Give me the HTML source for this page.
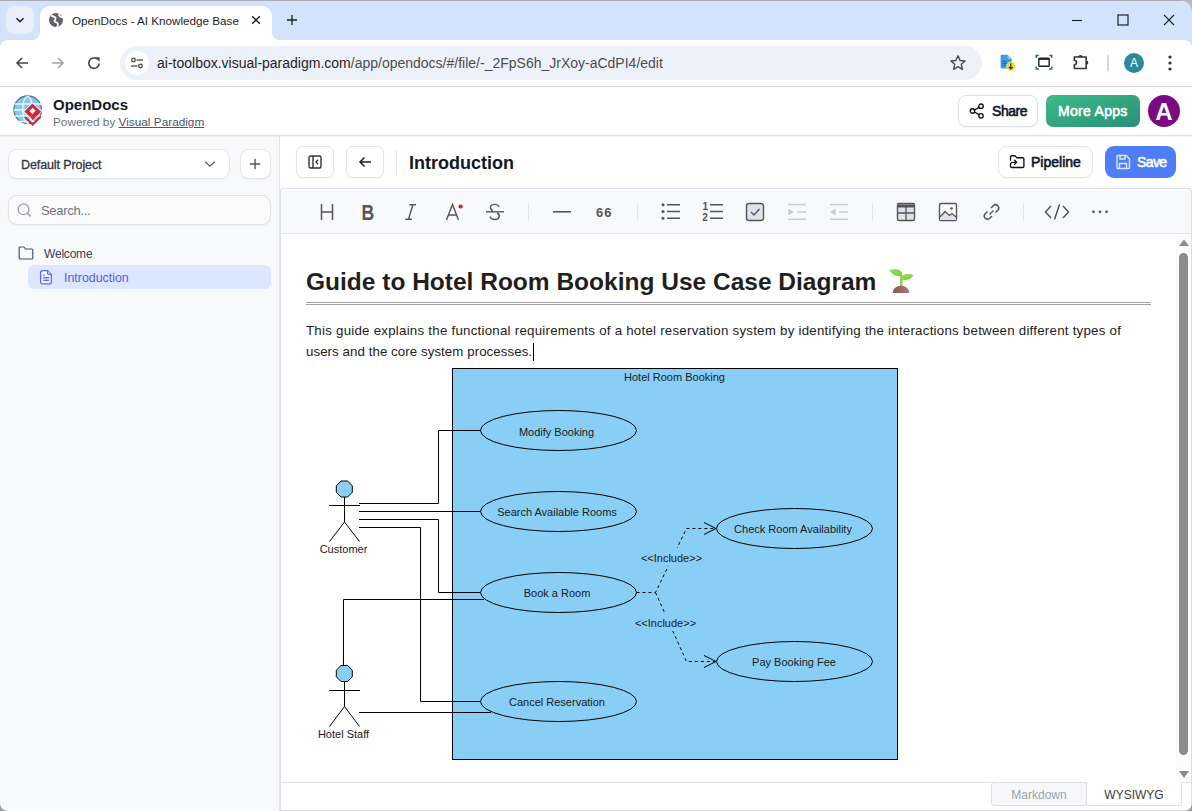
<!DOCTYPE html>
<html><head><meta charset="utf-8">
<style>
*{box-sizing:border-box;margin:0;padding:0}
html,body{width:1192px;height:811px;overflow:hidden;background:#fff;font-family:"Liberation Sans",sans-serif;position:relative}
.a{position:absolute}
svg{display:block}
/* chrome */
#tabstrip{left:0;top:0;width:1192px;height:40px;background:#d3e3fd}
#topline{left:0;top:0;width:1192px;height:1px;background:#a8acb2}
#toolbar{left:0;top:40px;width:1192px;height:46px;background:#fff}
#tbline{left:0;top:86px;width:1192px;height:1px;background:#d6d8db}
.tabtxt{font-size:11.7px;color:#1f1f1f;white-space:nowrap}
#addr{left:120px;top:46px;width:862px;height:34px;border-radius:17px;background:#edf2fa}
#url{left:157px;top:55px;font-size:14px;color:#1f1f1f;white-space:nowrap}
/* app header */
#hdr{left:0;top:87px;width:1192px;height:48px;background:#fff;box-shadow:0 1px 3px rgba(0,0,0,.12)}
.btn{position:absolute;border:1px solid #dcdfe4;border-radius:7px;background:#fff;box-shadow:0 1px 2px rgba(0,0,0,0.04)}
/* sidebar */
#side{left:0;top:135px;width:280px;height:676px;background:#f8f9fb;border-right:1px solid #e3e4ea}
/* main */
#topbar{left:280px;top:135px;width:912px;height:53px;background:#fff}
#edtb{left:280px;top:188px;width:912px;height:46px;background:#f8f9fc;border-top:1px solid #dfe0e8;border-bottom:1px solid #e3e4eb;border-left:1px solid #dfe0e8;border-top-left-radius:3px}
#content{left:280px;top:234px;width:912px;height:548px;background:#fff;border-left:1px solid #dfe0e8}
#bottom{left:280px;top:782px;width:912px;height:29px;background:#fff;border-top:1px solid #dfe0e8;border-left:1px solid #dfe0e8}
.ico{position:absolute}
</style></head><body>
<!-- ============ BROWSER CHROME ============ -->
<div id="tabstrip" class="a"></div>
<div id="topline" class="a"></div>
<!-- tab search chevron -->
<!-- active tab -->
<div class="a" style="left:40px;top:6px;width:232px;height:40px;background:#fff;border-radius:10px 10px 0 0"></div>
<div class="a" style="left:32px;top:30px;width:8px;height:10px;background:#fff"></div>
<div class="a" style="left:24px;top:22px;width:16px;height:18px;background:#d3e3fd;border-bottom-right-radius:8px"></div>
<div class="a" style="left:6px;top:6px;width:28px;height:28px;border-radius:8px;background:#e9effb"></div>
<svg class="a" style="left:14px;top:14px" width="12" height="12" viewBox="0 0 12 12"><path d="M2.5 4.2 L6 7.7 L9.5 4.2" fill="none" stroke="#1f1f1f" stroke-width="1.6"/></svg>
<div class="a" style="left:272px;top:30px;width:8px;height:10px;background:#fff"></div>
<div class="a" style="left:272px;top:22px;width:16px;height:18px;background:#d3e3fd;border-bottom-left-radius:8px"></div>
<svg class="a" style="left:49px;top:13px" width="14" height="14" viewBox="0 0 14 14"><circle cx="7" cy="7" r="7" fill="#5f6368"/><path d="M2.2 2.6 C4 3.6 5.6 3.2 6.4 4.6 C7.2 6 5.2 6.8 5.6 8.2 C6 9.6 8.2 9.2 8.8 10.6 C9.2 11.6 8.6 13 8.2 13.9 M10.4 1.2 C9.8 2.4 10.6 3.6 12 3.8 C12.8 3.9 13.4 4.3 13.8 5" fill="none" stroke="#fff" stroke-width="1.8"/></svg>
<div class="a tabtxt" style="left:72px;top:13.5px">OpenDocs - AI Knowledge Base</div>
<svg class="a" style="left:251px;top:15px" width="10" height="10" viewBox="0 0 10 10"><path d="M1.2 1.2 L8.8 8.8 M8.8 1.2 L1.2 8.8" stroke="#1f1f1f" stroke-width="1.4"/></svg>
<svg class="a" style="left:286px;top:14px" width="12" height="12" viewBox="0 0 12 12"><path d="M6 1 V11 M1 6 H11" stroke="#1f1f1f" stroke-width="1.3"/></svg>
<!-- window controls -->
<svg class="a" style="left:1071px;top:14px" width="12" height="12" viewBox="0 0 12 12"><path d="M1 6.5 H11" stroke="#1f1f1f" stroke-width="1.1"/></svg>
<svg class="a" style="left:1117px;top:14px" width="12" height="12" viewBox="0 0 12 12"><rect x="1" y="1" width="10" height="10" fill="none" stroke="#1f1f1f" stroke-width="1.2"/></svg>
<svg class="a" style="left:1163px;top:14px" width="12" height="12" viewBox="0 0 12 12"><path d="M1 1 L11 11 M11 1 L1 11" stroke="#1f1f1f" stroke-width="1.1"/></svg>

<div id="toolbar" class="a" style="top:40px;height:46px;border-radius:0"></div>
<div class="a" style="left:0;top:40px;width:1192px;height:46px;background:#fff"></div>
<div id="tbline" class="a"></div>
<svg class="a" style="left:0;top:40px" width="8" height="8" viewBox="0 0 8 8"><path d="M0 0 H8 C3.6 0 0 3.6 0 8 Z" fill="#d3e3fd"/></svg>
<svg class="a" style="left:1184px;top:40px" width="8" height="8" viewBox="0 0 8 8"><path d="M0 0 H8 V8 C8 3.6 4.4 0 0 0 Z" fill="#d3e3fd"/></svg>
<!-- nav -->
<svg class="a" style="left:14px;top:55px" width="16" height="16" viewBox="0 0 16 16"><path d="M14 8 H3 M8 3 L3 8 L8 13" fill="none" stroke="#474747" stroke-width="1.6"/></svg>
<svg class="a" style="left:50px;top:55px" width="16" height="16" viewBox="0 0 16 16"><path d="M2 8 H13 M8 3 L13 8 L8 13" fill="none" stroke="#a4a4a4" stroke-width="1.6"/></svg>
<svg class="a" style="left:86px;top:55px" width="16" height="16" viewBox="0 0 16 16"><path d="M13.2 8.4 A5.2 5.2 0 1 1 11.4 4.2" fill="none" stroke="#474747" stroke-width="1.6"/><path d="M9 2.2 H13.6 V6.8 Z" fill="#474747"/></svg>
<div id="addr" class="a"></div>
<div class="a" style="left:125px;top:51px;width:24px;height:24px;border-radius:12px;background:#fff"></div>
<svg class="a" style="left:130px;top:56px" width="14" height="14" viewBox="0 0 14 14"><circle cx="3.5" cy="4" r="1.8" fill="none" stroke="#474747" stroke-width="1.3"/><path d="M6.5 4 H13" stroke="#474747" stroke-width="1.3"/><circle cx="10.5" cy="10" r="1.8" fill="none" stroke="#474747" stroke-width="1.3"/><path d="M1 10 H7.5" stroke="#474747" stroke-width="1.3"/></svg>
<div id="url" class="a">ai-toolbox.visual-paradigm.com<span style="color:#4d4d4d">/app/opendocs/#/file/-_2FpS6h_JrXoy-aCdPI4/edit</span></div>
<svg class="a" style="left:949px;top:54px" width="18" height="18" viewBox="0 0 18 18"><path d="M9 1.8 L11.1 6.5 L16.1 7 L12.3 10.3 L13.4 15.3 L9 12.7 L4.6 15.3 L5.7 10.3 L1.9 7 L6.9 6.5 Z" fill="none" stroke="#474747" stroke-width="1.4" stroke-linejoin="round"/></svg>
<svg class="a" style="left:996px;top:50px" width="22" height="22" viewBox="996 50 22 22"><path d="M1002 54.8 H1007.5 L1011.7 59 V67.2 A1.4 1.4 0 0 1 1010.3 68.6 H1002 A1.4 1.4 0 0 1 1000.6 67.2 V56.2 A1.4 1.4 0 0 1 1002 54.8 Z" fill="#3b9be8"/><path d="M1007.5 54.8 L1011.7 59 H1008.5 A1 1 0 0 1 1007.5 58 Z" fill="#63dccb"/><path d="M1002.5 61.3 H1006 M1002.5 63.3 H1007 M1002.5 65.3 H1005.5" stroke="#1f5fa8" stroke-width="1"/><circle cx="1010.8" cy="66.3" r="4.6" fill="#f3dc3c"/><path d="M1010.8 63.2 V68.6 M1008.8 66.8 L1010.8 68.8 L1012.8 66.8" fill="none" stroke="#1d3a6e" stroke-width="1.2"/></svg>
<svg class="a" style="left:1032px;top:50px" width="24" height="24" viewBox="1032 50 24 24"><path d="M1036.3 58 V55.5 H1038.8 M1049.2 55.5 H1051.7 V58 M1051.7 66.5 V69 H1049.2 M1038.8 69 H1036.3 V66.5" fill="none" stroke="#1e7e34" stroke-width="1.5"/><rect x="1038.8" y="58.3" width="10.4" height="7.9" rx="0.8" fill="none" stroke="#222" stroke-width="1.4"/><path d="M1038.8 59 H1049.2" stroke="#222" stroke-width="1.8"/></svg>
<svg class="a" style="left:1068px;top:50px" width="26" height="24" viewBox="1068 50 26 24"><path d="M1074.3 57 H1086.2 V68.5 H1074.3 V64.7 A2.2 2.2 0 0 0 1074.3 60.3 Z" fill="none" stroke="#333" stroke-width="1.6" stroke-linejoin="round"/><path d="M1078.3 57 A2.1 2.1 0 0 1 1082.5 57 Z" fill="#333"/><path d="M1086.2 60.6 A2.1 2.1 0 0 1 1086.2 64.8 Z" fill="#333"/></svg>
<div class="a" style="left:1107px;top:55px;width:1.5px;height:16px;background:#c7d7f5"></div>
<div class="a" style="left:1124px;top:53px;width:20px;height:20px;border-radius:10px;background:#2a8a99;color:#fff;font-size:12px;text-align:center;line-height:20px">A</div>
<svg class="a" style="left:1166px;top:55px" width="8" height="16" viewBox="0 0 8 16"><circle cx="4" cy="2" r="1.6" fill="#333"/><circle cx="4" cy="8" r="1.6" fill="#333"/><circle cx="4" cy="14" r="1.6" fill="#333"/></svg>

<!-- ============ APP HEADER ============ -->
<div id="hdr" class="a"></div>
<svg class="a" style="left:8px;top:90px" width="40" height="40" viewBox="8 90 40 40">
 <circle cx="27.7" cy="109.7" r="13.8" fill="#84c8f0" stroke="#4f6f7f" stroke-width="1.1"/>
 <g fill="none" stroke="#e8f5fd" stroke-width="1.4">
  <path d="M14.5 104 H41 M14 110 H41.5 M15 116 H40 M17.5 121.5 H38"/>
  <path d="M27.7 96 C21 100 21 119 27.7 123.5 M27.7 96 C34 100 34 119 27.7 123.5"/>
 </g>
 <path d="M22.8 111.8 L32.4 102.6 L42 111.6 L32.6 121 Z" fill="#fff"/>
 <path d="M24.3 111.6 L32.4 103.4 L41.2 111.8 L35.4 117.6 L32 114.4 L35.6 110.8 L32.7 107.8 L29.4 111.1 L32.6 114.3 L30 117 Z" fill="#cd2a36"/>
 <path d="M30 117 L32.6 114.3 L35.4 117.6 L32.8 120.2 Z" fill="#cd2a36"/>
 <path d="M24.8 117 L32.7 124.6 L40.8 116.6" fill="none" stroke="#cd2a36" stroke-width="2.1"/>
</svg>
<div class="a" style="left:53px;top:96px;font-size:15px;font-weight:bold;color:#111827">OpenDocs</div>
<div class="a" style="left:53px;top:115px;font-size:11.8px;color:#6b7280">Powered by <span style="text-decoration:underline;color:#4b5563">Visual Paradigm</span></div>
<div class="btn" style="left:958px;top:95px;width:80px;height:32px;border-radius:8px"></div>
<svg class="a" style="left:969px;top:103px" width="16" height="16" viewBox="0 0 16 16"><circle cx="12" cy="3.2" r="2.2" fill="none" stroke="#111" stroke-width="1.4"/><circle cx="3.5" cy="8" r="2.2" fill="none" stroke="#111" stroke-width="1.4"/><circle cx="12" cy="12.8" r="2.2" fill="none" stroke="#111" stroke-width="1.4"/><path d="M5.4 7 L10.1 4.3 M5.4 9 L10.1 11.7" stroke="#111" stroke-width="1.4"/></svg>
<div class="a" style="left:992px;top:103px;font-size:14px;color:#111827;letter-spacing:-0.45px;-webkit-text-stroke:0.6px #111827">Share</div>
<div class="a" style="left:1046px;top:95px;width:94px;height:32px;border-radius:7px;background:linear-gradient(160deg,#3dbb85,#2a8f78)"></div>
<div class="a" style="left:1058px;top:103px;font-size:14px;color:#fff;letter-spacing:0.3px;-webkit-text-stroke:0.6px #fff">More Apps</div>
<div class="a" style="left:1148px;top:95px;width:32px;height:32px;border-radius:16px;background:#7b0a82;color:#fff;font-size:24px;font-weight:bold;text-align:center;line-height:33px">A</div>

<!-- ============ SIDEBAR ============ -->
<div id="side" class="a"></div>
<div class="btn" style="left:8px;top:149px;width:222px;height:30px;border-radius:9px;border-color:#e3e6ea"></div>
<div class="a" style="left:21px;top:158px;font-size:12.5px;color:#333a48;letter-spacing:-0.1px;-webkit-text-stroke:0.35px #333a48">Default Project</div>
<svg class="a" style="left:204px;top:158px" width="12" height="12" viewBox="0 0 12 12"><path d="M1.2 3.8 L6 8.3 L10.8 3.8" fill="none" stroke="#4b5563" stroke-width="1.2"/></svg>
<div class="btn" style="left:240px;top:149px;width:31px;height:30px;border-radius:9px;border-color:#e3e6ea"></div>
<svg class="a" style="left:248px;top:157px" width="14" height="14" viewBox="0 0 14 14"><path d="M7 1.8 V12.3 M1.8 7 H12.3" stroke="#4b5563" stroke-width="1.4"/></svg>
<div class="btn" style="left:8px;top:195px;width:263px;height:30px;border-radius:9px;border-color:#e2e3e6;background:#fbfbfc;box-shadow:0 1px 2px rgba(0,0,0,0.05)"></div>
<svg class="a" style="left:16px;top:202px" width="16" height="16" viewBox="0 0 16 16"><circle cx="7.5" cy="7.3" r="5.4" fill="none" stroke="#9aa1ad" stroke-width="1.3"/><path d="M11.3 11.2 L14.6 14.4" stroke="#9aa1ad" stroke-width="1.5"/></svg>
<div class="a" style="left:41px;top:203px;font-size:13px;color:#6b7280;letter-spacing:-0.3px">Search...</div>
<svg class="a" style="left:18px;top:246px" width="16" height="14" viewBox="0 0 16 14"><path d="M1.2 2 A1 1 0 0 1 2.2 1 H6 L7.5 3 H13.8 A1 1 0 0 1 14.8 4 V12 A1 1 0 0 1 13.8 13 H2.2 A1 1 0 0 1 1.2 12 Z" fill="none" stroke="#4b5563" stroke-width="1.2"/></svg>
<div class="a" style="left:44px;top:247px;font-size:12px;color:#374151;letter-spacing:-0.2px">Welcome</div>
<div class="a" style="left:28px;top:265px;width:243px;height:24px;border-radius:6px;background:#dbe7fe"></div>
<svg class="a" style="left:39px;top:269px" width="14" height="16" viewBox="0 0 14 16"><path d="M3.2 1.7 H8.6 L12.3 5.4 V13.2 A1.6 1.6 0 0 1 10.7 14.8 H3.2 A1.6 1.6 0 0 1 1.6 13.2 V3.3 A1.6 1.6 0 0 1 3.2 1.7 Z" fill="#f3f5ff" stroke="#5c6cf2" stroke-width="1.3" stroke-linejoin="round"/><path d="M8.6 1.7 V4.4 A1 1 0 0 0 9.6 5.4 H12.3" fill="#dbe3ff" stroke="#5c6cf2" stroke-width="1.2"/><rect x="4.2" y="9.3" width="5.6" height="2.8" fill="#c9d2fb"/><path d="M4.2 6.2 H5.8 M4.2 8.6 H10 M4.2 11.4 H10" stroke="#5c6cf2" stroke-width="1.2"/></svg>
<div class="a" style="left:64px;top:271px;font-size:12.4px;color:#5b5ce0">Introduction</div>

<!-- ============ MAIN TOP BAR ============ -->
<div id="hdrline" class="a" style="left:0;top:135px;width:1192px;height:1px;background:#dfe1e5;z-index:5"></div><div class="a" style="left:0;top:136px;width:1192px;height:1px;background:rgba(0,0,0,0.035);z-index:5"></div>
<div id="topbar" class="a"></div>
<div class="btn" style="left:296px;top:146px;width:38px;height:32px;border-color:#e2e5e9"></div>
<svg class="a" style="left:308px;top:155px" width="14" height="14" viewBox="0 0 14 14"><rect x="1" y="1" width="12" height="12" rx="1.5" fill="none" stroke="#333" stroke-width="1.4"/><path d="M5 1 V13" stroke="#333" stroke-width="1.4"/><path d="M10 4.8 L8 7 L10 9.2" fill="none" stroke="#333" stroke-width="1.3"/></svg>
<div class="btn" style="left:346px;top:146px;width:38px;height:32px;border-color:#e2e5e9"></div>
<svg class="a" style="left:358px;top:155px" width="14" height="14" viewBox="0 0 14 14"><path d="M13 7 H2 M6.5 2.5 L2 7 L6.5 11.5" fill="none" stroke="#222" stroke-width="1.5"/></svg>
<div class="a" style="left:396px;top:150px;width:1px;height:24px;background:#e5e7eb"></div>
<div class="a" style="left:409px;top:153px;font-size:18px;font-weight:bold;color:#111827">Introduction</div>
<div class="btn" style="left:998px;top:146px;width:95px;height:32px;border-color:#e2e5e9;border-radius:9px"></div>
<svg class="a" style="left:1005px;top:150px" width="24" height="24" viewBox="1005 150 24 24"><path d="M1010.5 160.2 V157 A1.3 1.3 0 0 1 1011.8 155.7 H1014.6 A1 1 0 0 1 1015.4 156.1 L1016.6 157.7 H1022.6 A1.3 1.3 0 0 1 1023.9 159 V166.2 A1.3 1.3 0 0 1 1022.6 167.5 H1011.8 A1.3 1.3 0 0 1 1010.5 166.2 V164.2 A1.9 1.9 0 0 1 1012.4 162.3 H1016.3 M1014.6 160.3 L1016.6 162.3 L1014.6 164.3" fill="none" stroke="#111" stroke-width="1.35" stroke-linecap="round" stroke-linejoin="round"/></svg>
<div class="a" style="left:1031px;top:154px;font-size:14px;color:#111827;-webkit-text-stroke:0.6px #111827">Pipeline</div>
<div class="a" style="left:1105px;top:146px;width:71px;height:32px;border-radius:9px;background:#4d7ef7"></div>
<svg class="a" style="left:1115px;top:154px" width="16" height="16" viewBox="0 0 16 16"><path d="M2 2.5 A1 1 0 0 1 3 1.5 H11 L14.5 5 V13.5 A1 1 0 0 1 13.5 14.5 H3 A1 1 0 0 1 2 13.5 Z" fill="none" stroke="#dfe8ff" stroke-width="1.4"/><path d="M5 1.5 V5 H10 V1.5 M4.5 14.5 V9.5 H11.5 V14.5" fill="none" stroke="#dfe8ff" stroke-width="1.4"/></svg>
<div class="a" style="left:1137px;top:154px;font-size:14px;color:#fff;letter-spacing:-0.6px;-webkit-text-stroke:0.6px #fff">Save</div>

<!-- ============ EDITOR TOOLBAR ============ -->
<div id="edtb" class="a"></div>
<svg class="a" style="left:280px;top:189px" width="912" height="44" viewBox="280 189 912 44">
 <g fill="none" stroke="#555" stroke-width="1.5">
  <!-- H -->
  <path d="M321.5 204 V220 M332.5 204 V220 M321.5 212 H332.5"/>
  <!-- I italic -->
  <path d="M409.5 204.8 H416 M405.3 219.3 H411.8 M412.8 204.8 L408.5 219.3" stroke-width="1.4"/>
  <!-- A -->
  <path d="M446.5 220 L452.5 204.5 L458.5 220 M448.6 215 H456.4" stroke-width="1.4"/>
  <!-- S strike -->
  <path d="M499 207 C498 204.5 495 204 493 204.6 C489.5 205.5 489.5 209.5 493 210.8 M497 213 C501 215 499.5 219.5 495 219.5 C492 219.5 490.5 218 490 216.5" stroke-width="1.4"/>
  <path d="M486 211.8 H504" stroke-width="1.4"/>
  <!-- hr -->
  <path d="M553 211.8 H571" stroke-width="1.6"/>
  <!-- bullet list -->
  <path d="M667 204.7 H680 M667 211.5 H680 M667 218.3 H680" stroke-width="1.5"/>
  <!-- numbered -->
  <path d="M710 204.7 H723 M710 211.5 H723 M710 218.3 H723" stroke-width="1.5"/>
  <!-- checkbox -->
  <rect x="746.5" y="203.5" width="17" height="17" rx="2.5" fill="#dfe2ee" stroke="#555" stroke-width="1.4"/>
  <path d="M751 212 L754 215 L759.5 209" stroke-width="1.4"/>
  <!-- indent (disabled) -->
  <path d="M788 204.5 H806 M797.5 212 H806 M788 219.3 H806" stroke="#c9ccd2" stroke-width="1.5"/>
  <path d="M830 204.5 H848 M839 212 H848 M830 219.3 H848" stroke="#c9ccd2" stroke-width="1.5"/>
  <!-- table -->
  <rect x="897.5" y="203.5" width="17" height="17" rx="1.5" fill="#dfe2ee" stroke="#555" stroke-width="1.4"/>
  <path d="M897.5 206 H914.5" stroke="#555" stroke-width="3"/>
  <path d="M897.5 213 H914.5 M906 205 V220.5" stroke-width="1.3"/>
  <!-- image -->
  <rect x="939.5" y="203.5" width="17" height="17" rx="1.5" fill="#fff" stroke="#555" stroke-width="1.4"/>
  <path d="M940 217 L945 211.5 L949.5 215.5 L952 213.5 L956 217 V220 H940 Z" fill="#dfe2ee" stroke="none"/>
  <path d="M940 217 L945 211.5 L949.5 215.5 L952 213.5 L956 217" stroke-width="1.3"/>
  <circle cx="951.5" cy="208.5" r="1.3" fill="#555" stroke="none"/>
  <!-- link -->
  <path d="M989.5 214.5 L993.5 210.5" stroke-width="1.5"/>
  <path d="M991 208 L993.5 205.5 A3.2 3.2 0 0 1 998 210 L995.5 212.5" stroke-width="1.5"/>
  <path d="M992 216 L989.5 218.5 A3.2 3.2 0 0 1 985 214 L987.5 211.5" stroke-width="1.5"/>
  <!-- code -->
  <path d="M1051 206 L1045.5 212 L1051 218 M1063 206 L1068.5 212 L1063 218 M1059.5 204.5 L1054.5 219.5" stroke-width="1.5"/>
 </g>
 <!-- B -->
 <text transform="translate(361.6,220) scale(0.8,1)" font-family="Liberation Sans" font-weight="bold" font-size="22" fill="#555">B</text>
 <circle cx="460.6" cy="206.5" r="2.1" fill="#e8141e"/>
 <text x="596" y="216.6" font-family="Liberation Sans" font-weight="bold" font-size="13" fill="#555" letter-spacing="1">66</text>
 <g fill="#555">
  <circle cx="663" cy="204.7" r="1.5"/><circle cx="663" cy="211.5" r="1.5"/><circle cx="663" cy="218.3" r="1.5"/>
  <circle cx="1093.5" cy="211.8" r="1.4"/><circle cx="1100" cy="211.8" r="1.4"/><circle cx="1106.5" cy="211.8" r="1.4"/>
 </g>
 <text x="702.5" y="210" font-family="Liberation Sans" font-weight="bold" font-size="10" fill="#555">1</text>
 <text x="702.3" y="221.3" font-family="Liberation Sans" font-weight="bold" font-size="10" fill="#555">2</text>
 <path d="M788.3 208.6 L794 212 L788.3 215.4 Z" fill="#c9ccd2"/>
 <path d="M835.7 208.6 L830 212 L835.7 215.4 Z" fill="#c9ccd2"/>
 <g fill="#e3e5ea"><rect x="528" y="203.5" width="1" height="17"/><rect x="637" y="203.5" width="1" height="17"/><rect x="872" y="203.5" width="1" height="17"/><rect x="1023" y="203.5" width="1" height="17"/></g>
</svg>

<!-- ============ CONTENT ============ -->
<div id="content" class="a"></div>
<div class="a" style="left:306px;top:268px;font-size:24.5px;font-weight:bold;color:#1f1f1f;white-space:nowrap">Guide to Hotel Room Booking Use Case Diagram</div>
<svg class="a" style="left:886px;top:266px" width="30" height="30" viewBox="886 266 30 30">
 <defs><linearGradient id="soil" x1="0" y1="0" x2="1" y2="0"><stop offset="0" stop-color="#8a5a52"/><stop offset="1" stop-color="#a87a72"/></linearGradient>
 <linearGradient id="leaf" x1="0" y1="0" x2="1" y2="1"><stop offset="0" stop-color="#9be04f"/><stop offset="1" stop-color="#7cc843"/></linearGradient></defs>
 <path d="M901.3 286 V276" stroke="#8fd34f" stroke-width="2.6"/>
 <path d="M889.4 270 C893 268.6 898.5 268.8 901 271.2 C902.4 272.6 902.4 275 901.6 276.3 C897.5 276.6 892.3 275.6 889.4 270 Z" fill="url(#leaf)"/>
 <path d="M913.3 275.2 C910.8 273.6 905.5 273.6 902.6 275.3 C901.4 276 901.2 278.5 901.8 279.7 C906 280.4 911.3 279.6 913.3 275.2 Z" fill="url(#leaf)"/>
 <path d="M892.8 293 C892.8 288.8 896.4 285.8 901 285.8 C905.6 285.8 909.2 288.8 909.2 293 Z" fill="url(#soil)"/>
</svg>
<div class="a" style="left:306px;top:302px;width:845px;height:1px;background:#a0a0a0"></div>
<div class="a" style="left:306px;top:304px;width:845px;height:1px;background:#a0a0a0"></div>
<div class="a" style="left:306px;top:320px;font-size:13.3px;line-height:21px;color:#222;letter-spacing:0.24px;white-space:nowrap">This guide explains the functional requirements of a hotel reservation system by identifying the interactions between different types of</div>
<div class="a" style="left:306px;top:341px;font-size:13.3px;line-height:21px;color:#222;letter-spacing:0.06px;white-space:nowrap">users and the core system processes.</div>
<div class="a" style="left:533px;top:343px;width:1px;height:18px;background:#000"></div>

<!-- DIAGRAM -->
<svg class="a" style="left:0;top:0" width="1192" height="811" viewBox="0 0 1192 811">
 <rect x="452.5" y="368.5" width="445" height="391" fill="#89cff5" stroke="#000" stroke-width="1"/>
 <g fill="none" stroke="#000" stroke-width="1">
  <!-- customer associations -->
  <path d="M359 503.5 H438.5 V430.5 H481"/>
  <path d="M359 511.5 H481"/>
  <path d="M359 519.5 H438.5 V592.5 H481"/>
  <path d="M359 527.5 H420.5 V701.5 H481"/>
  <!-- staff -->
  <path d="M343.5 665 V599.5 H484"/>
  <path d="M359 712.5 H491"/>
 </g>
 <g fill="#89cff5" stroke="#000" stroke-width="1">
  <ellipse cx="558.5" cy="430.5" rx="78" ry="20"/>
  <ellipse cx="558.5" cy="511.5" rx="78" ry="20"/>
  <ellipse cx="558.5" cy="592.5" rx="78" ry="20"/>
  <ellipse cx="558.5" cy="701.5" rx="78" ry="20"/>
  <ellipse cx="794.5" cy="528.5" rx="78" ry="20"/>
  <ellipse cx="794.5" cy="661.5" rx="78" ry="20"/>
 </g>
 <!-- re-draw line ends over ellipse edge for staff lines -->
 <g fill="none" stroke="#000" stroke-width="1">
  <path d="M481 599.5 H484"/>
  <path d="M484 712.5 H491"/>
 </g>
 <!-- include -->
 <g fill="none" stroke="#000" stroke-width="1" stroke-dasharray="3 3">
  <path d="M636.5 592.5 H655.5 L686.5 528.5 H716"/>
  <path d="M655.5 592.5 L686.5 661.5 H716"/>
 </g>
 <g fill="none" stroke="#000" stroke-width="1">
  <path d="M704 522.5 L716 528.5 L704 534.5"/>
  <path d="M704 655.5 L716 661.5 L704 667.5"/>
 </g>
 <rect x="641" y="548" width="61" height="18" fill="#89cff5"/>
 <rect x="635" y="614" width="61" height="17" fill="#89cff5"/>
 <g font-family="Liberation Sans" font-size="11" fill="#1a1a1a" text-anchor="middle">
  <text x="674.5" y="381">Hotel Room Booking</text>
  <text x="556.5" y="435.5">Modify Booking</text>
  <text x="557" y="515.5">Search Available Rooms</text>
  <text x="557" y="596.5">Book a Room</text>
  <text x="557" y="705.5">Cancel Reservation</text>
  <text x="793" y="532.5">Check Room Availability</text>
  <text x="794" y="665.5">Pay Booking Fee</text>
  <text x="671.5" y="561.5">&lt;&lt;Include&gt;&gt;</text>
  <text x="665.5" y="627">&lt;&lt;Include&gt;&gt;</text>
  <text x="343.5" y="552.5">Customer</text>
  <text x="343.5" y="737.5">Hotel Staff</text>
 </g>
 <!-- actors -->
 <g fill="none" stroke="#000" stroke-width="1">
  <path d="M344.5 497 V522 M329 505.5 H360 M344.5 522 L329.5 541.5 M344.5 522 L359.5 541.5"/>
  <path d="M344.5 681.5 V706.5 M329 690.5 H360 M344.5 706.5 L329.5 726.5 M344.5 706.5 L359.5 726.5"/>
 </g>
 <polygon points="341,481 347.6,481 352.3,485.7 352.3,492.3 347.6,497 341,497 336.3,492.3 336.3,485.7" fill="#89cff5" stroke="#000" stroke-width="1"/>
 <polygon points="341,665.5 347.6,665.5 352.3,670.2 352.3,676.8 347.6,681.5 341,681.5 336.3,676.8 336.3,670.2" fill="#89cff5" stroke="#000" stroke-width="1"/>
</svg>

<!-- scrollbar -->
<div class="a" style="left:1176px;top:234px;width:15px;height:548px;background:#fbfbfb"></div>
<div class="a" style="left:1179px;top:253px;width:9px;height:502px;border-radius:4.5px;background:#8c8c8c"></div>
<svg class="a" style="left:1176px;top:236px" width="16" height="12" viewBox="0 0 16 12"><path d="M3 10 L8 3.5 L13 10 Z" fill="#8c8c8c"/></svg>
<svg class="a" style="left:1176px;top:768px" width="16" height="12" viewBox="0 0 16 12"><path d="M3 3 L8 10 L13 3 Z" fill="#8c8c8c"/></svg>

<!-- ============ BOTTOM ============ -->
<div id="bottom" class="a"></div>
<div class="a" style="left:991px;top:782px;width:96px;height:24px;background:#f7f8fb;border:1px solid #dcdde6;border-radius:3px"></div>
<div class="a" style="left:1086px;top:782px;width:96px;height:24px;background:#fff;border:1px solid #dcdde6;border-top-color:#fff;border-radius:3px"></div>
<div class="a" style="left:991px;top:788px;width:96px;text-align:center;font-size:12px;color:#9ca3af">Markdown</div>
<div class="a" style="left:1086px;top:788px;width:96px;text-align:center;font-size:12px;color:#3c3c3c">WYSIWYG</div>
<div class="a" style="left:280px;top:810px;width:912px;height:1px;background:#dcdde6"></div>
<div class="a" style="left:1191px;top:190px;width:1px;height:620px;background:#dcdde6"></div>
<svg class="a" style="left:1187px;top:188px" width="5" height="5" viewBox="0 0 5 5"><path d="M0 0.5 H1.5 A3.5 3.5 0 0 1 4.5 3.5 V5" fill="none" stroke="#dcdde6" stroke-width="1"/><path d="M1.5 0 H5 V3.5 A3.5 3.5 0 0 0 1.5 0 Z" fill="#fff"/></svg>
<svg class="a" style="left:0;top:803px" width="8" height="8" viewBox="0 0 8 8"><path d="M0 0 C0 4.4 3.6 8 8 8 H0 Z" fill="#9a9a9a"/></svg>
<svg class="a" style="left:1184px;top:803px" width="8" height="8" viewBox="0 0 8 8"><path d="M8 0 C8 4.4 4.4 8 0 8 H8 Z" fill="#9a9a9a"/></svg>
<svg class="a" style="left:1180px;top:0" width="12" height="12" viewBox="0 0 12 12"><path d="M0 0 H12 V12 C12 5 7 0.5 0 0.5 Z" fill="#b8b8b8"/></svg>
</body></html>
